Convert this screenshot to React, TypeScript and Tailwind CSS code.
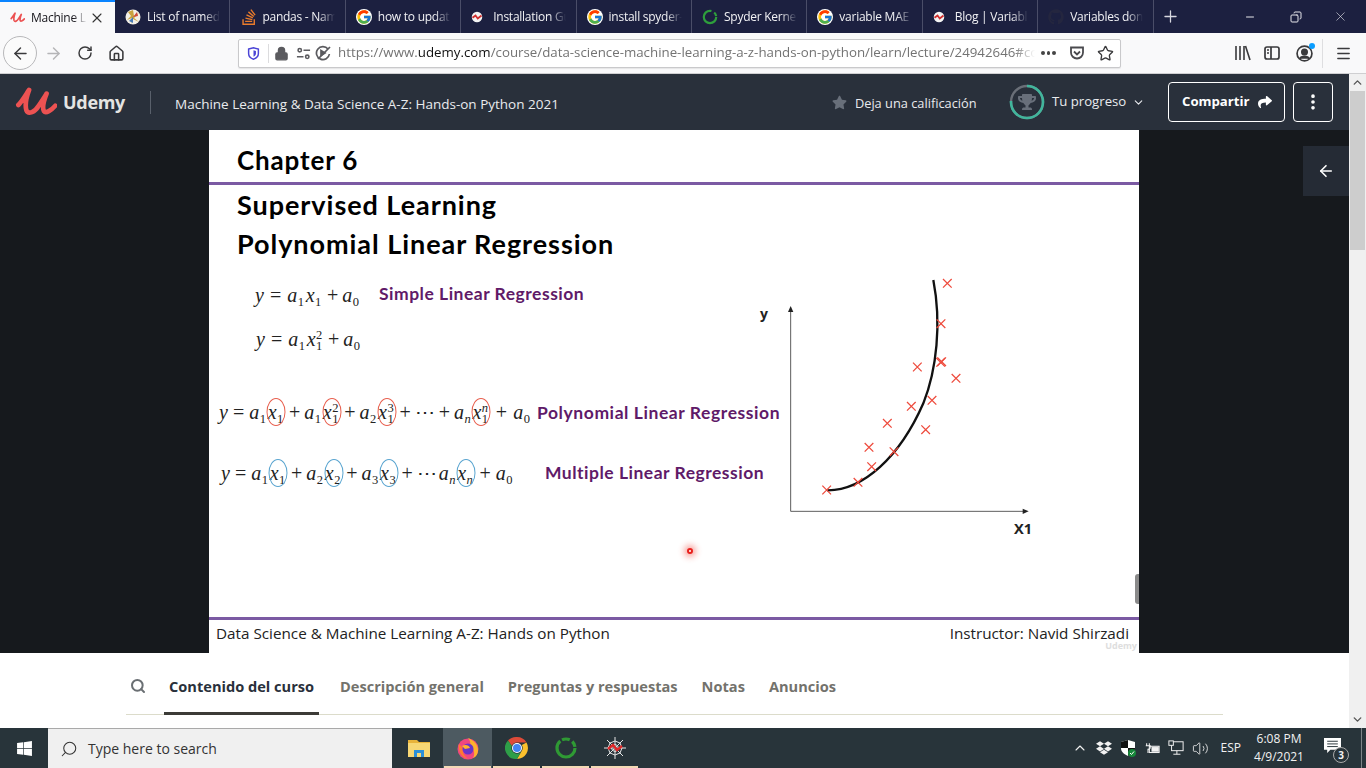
import React from 'react'
import { ArrowLeft, ArrowRight, ChevronDown, ChevronUp, Copy, EllipsisVertical, House, Lock, Menu, Minus, Plus, RotateCw, Search, Star, Volume2, X } from 'lucide-react'
import { FaDropbox, FaGithub, FaShare, FaStackOverflow, FaStar, FaTrophy, FaWindows } from 'react-icons/fa'
import { FcGoogle } from 'react-icons/fc'

const UdemyU = ({ className }: { className: string }) => (
    <svg viewBox="30 16 125 94" className={className} fill="none" stroke="#ec5252" strokeLinecap="round" strokeLinejoin="round">
        <path strokeWidth="14" d="M40 72 C52 60 62 42 72 27 C64 48 58 68 64 88 C70 102 90 92 100 75 C110 60 118 48 124 38 C116 58 110 78 116 90 C122 98 138 88 150 74" />
    </svg>
)

const GlobeIcon = () => (
    <svg viewBox="0 0 16 16" className="w-4 h-4">
        <circle cx="8" cy="8" r="7.5" fill="#f2efe6" />
        <path d="M8 1 L9 7 L14 4 L9 9 L14 13 L8 10 L6 15 L7 9 L2 11 L6 7 L3 3 Z" fill="#c9a23c" />
        <path d="M8 8 L12 3 L13 7 Z" fill="#d04a3c" />
        <path d="M8 8 L4 12 L8 14 Z" fill="#4a7bb5" />
    </svg>
)

const SpyderFav = () => (
    <svg viewBox="0 0 16 16" className="w-3 h-3">
        <circle cx="8" cy="8" r="7" fill="#f4f4f4" />
        <path d="M2 9 L6 6 L9 10 L14 6" fill="none" stroke="#cf2f2f" strokeWidth="2.4" />
    </svg>
)

const RingFav = () => (
    <svg viewBox="0 0 16 16" className="w-4 h-4">
        <circle cx="8" cy="8" r="6.2" fill="none" stroke="#2e9e3c" strokeWidth="2.2" strokeDasharray="30 3 4 2" />
    </svg>
)

const tabs = [
    { title: 'List of named', icon: <GlobeIcon /> },
    { title: 'pandas - Nam', icon: <FaStackOverflow className="w-[18px] h-[18px] text-[#e87b2c]" /> },
    { title: 'how to updat', icon: <FcGoogle className="w-4 h-4 bg-white rounded-full" /> },
    { title: 'Installation Gu', icon: <SpyderFav /> },
    { title: 'install spyder-', icon: <FcGoogle className="w-4 h-4 bg-white rounded-full" /> },
    { title: 'Spyder Kernel', icon: <RingFav /> },
    { title: 'variable MAE i', icon: <FcGoogle className="w-4 h-4 bg-white rounded-full" /> },
    { title: 'Blog | Variable', icon: <SpyderFav /> },
    { title: "Variables don'", icon: <FaGithub className="w-4 h-4 text-[#24263f]" /> },
]

const TabStrip = () => (
    <div className="h-[33px] bg-[#1c2040] flex items-stretch shrink-0 text-[12px] tracking-[-0.25px]">
        <div className="w-[115px] bg-[#f9f9fa] border-t-2 border-[#0a84ff] flex items-center pl-[10px] text-[#15141a]">
            <UdemyU className="w-[15px] h-[13px] shrink-0" />
            <span className="ml-[6px] w-[56px] overflow-hidden whitespace-nowrap [mask-image:linear-gradient(to_right,black_75%,transparent)]">Machine L</span>
            <X className="w-[16px] h-[16px] ml-[2px] text-[#333]" strokeWidth={1.6} />
        </div>
        {tabs.map((tab) => (
            <div key={tab.title} className="w-[115.4px] flex items-center border-r border-[#4a4d68] pl-[9px] text-[#f1f1f4]">
                <span className="w-[20px] shrink-0 flex items-center pl-[1px]">{tab.icon}</span>
                <span className="ml-[3px] w-[73px] overflow-hidden whitespace-nowrap [mask-image:linear-gradient(to_right,black_78%,transparent)]">{tab.title}</span>
            </div>
        ))}
        <div className="w-[34px] flex items-center justify-center text-[#d8d8e0]">
            <Plus className="w-[19px] h-[19px]" strokeWidth={1.6} />
        </div>
        <div className="ml-auto mr-[3px] flex items-center text-[#e6e6ea]">
            <span className="w-[46px] flex justify-center"><Minus className="w-3 h-3" /></span>
            <span className="w-[45px] flex justify-center"><Copy className="w-3 h-3 -scale-x-100" /></span>
            <span className="w-[45px] flex justify-center"><X className="w-[15px] h-[15px]" strokeWidth={1} /></span>
        </div>
    </div>
)

const Toolbar = () => (
    <div className="h-[41px] bg-[#f9f9fa] border-b border-[#cfcfd1] flex items-center shrink-0 text-[#3a3a3c]">
        <div className="ml-[3px] w-[34px] h-[34px] rounded-full border border-[#b8b8ba] bg-[#fbfbfb] flex items-center justify-center">
            <ArrowLeft className="w-[19px] h-[19px]" strokeWidth={1.8} />
        </div>
        <ArrowRight className="ml-[7px] w-[19px] h-[19px] text-[#b5b5b7]" strokeWidth={1.8} />
        <RotateCw className="ml-[14px] w-[16px] h-[16px]" strokeWidth={2.2} />
        <House className="ml-[15px] w-[17px] h-[17px]" strokeWidth={2.2} />
        <div className="ml-[113px] w-[883px] h-[29px] bg-white border border-[#c9c9cb] rounded-[2px] flex items-center shadow-[0_1px_1px_rgba(0,0,0,0.08)]">
            <svg viewBox="0 0 16 16" className="ml-[8px] w-[13px] h-[15px]">
                <path d="M2 2.5 L8 1 L14 2.5 V8 C14 11.5 11 14 8 15 C5 14 2 11.5 2 8 Z" fill="none" stroke="#4b44d6" strokeWidth="1.8" />
                <path d="M8 4 L11 5 V8 C11 10 9.5 11.2 8 12 Z" fill="#4b44d6" />
            </svg>
            <span className="ml-[8px] w-px h-[19px] bg-[#dcdcde]" />
            <Lock className="ml-[5px] w-[15px] h-[15px] fill-[#5b5b5f] text-[#5b5b5f]" strokeWidth={2} />
            <svg viewBox="0 0 16 16" className="ml-[7px] w-[15px] h-[15px]" fill="none" stroke="#5b5b5f" strokeWidth="1.7">
                <circle cx="4" cy="4.5" r="1.8" />
                <path d="M8 4.5 H15 M1 11.5 H8" />
                <circle cx="12" cy="11.5" r="1.8" />
            </svg>
            <svg viewBox="0 0 16 16" className="ml-[4px] w-[16px] h-[16px]" fill="none" stroke="#5b5b5f" strokeWidth="1.7">
                <path d="M13 4 A6.5 6.5 0 1 0 14.4 9" />
                <path d="M6 5.5 V10.5 L10 8 Z" fill="#5b5b5f" />
                <path d="M3 14 L15 2" />
            </svg>
            <span className="ml-[7px] w-[697px] overflow-hidden whitespace-nowrap text-[13.3px] text-[#737373] [mask-image:linear-gradient(to_right,black_97%,transparent)]">
                https://www.<span className="text-[#111]">udemy.com</span>/course/data-science-machine-learning-a-z-hands-on-python/learn/lecture/24942646#content
            </span>
            <span className="ml-[6px] flex gap-[2px]">
                <i className="w-[3.5px] h-[3.5px] rounded-full bg-[#444]" />
                <i className="w-[3.5px] h-[3.5px] rounded-full bg-[#444]" />
                <i className="w-[3.5px] h-[3.5px] rounded-full bg-[#444]" />
            </span>
            <svg viewBox="0 0 16 16" className="ml-[13px] w-[16px] h-[16px]" fill="none" stroke="#4a4a4e" strokeWidth="1.8">
                <path d="M2 2.5 H14 V7.5 A6 6 0 0 1 2 7.5 Z" />
                <path d="M5 6.5 L8 9.5 L11 6.5" />
            </svg>
            <Star className="ml-[12px] w-[17px] h-[17px]" strokeWidth={1.9} />
        </div>
        <svg viewBox="0 0 17 16" className="ml-[113px] w-[17px] h-[16px]" fill="none" stroke="#3a3a3c" strokeWidth="1.6">
            <path d="M2 1 V15 M6 1 V15 M10 1 V15 M11.5 1 L16 15" />
        </svg>
        <svg viewBox="0 0 16 16" className="ml-[13px] w-[16px] h-[16px]" fill="none" stroke="#3a3a3c" strokeWidth="1.7">
            <rect x="1" y="2" width="14" height="12" rx="2" />
            <path d="M7 2 V14 M3 5 H5 M3 8 H5" />
        </svg>
        <div className="relative ml-[16px] w-[17px] h-[17px]">
            <svg viewBox="0 0 16 16" className="w-[17px] h-[17px]" fill="none" stroke="#3a3a3c" strokeWidth="1.6">
                <circle cx="8" cy="8" r="7" />
                <circle cx="8" cy="6.5" r="2.5" fill="#3a3a3c" />
                <path d="M3.5 13 C5 10 11 10 12.5 13" fill="#3a3a3c" />
            </svg>
            <span className="absolute -top-[2px] -right-[2px] w-[6px] h-[6px] rounded-full bg-[#0a9dff]" />
        </div>
        <span className="ml-[9px] w-px h-[29px] bg-[#dedee0]" />
        <Menu className="ml-[12px] w-[17px] h-[17px]" strokeWidth={2} />
    </div>
)

const CourseHeader = () => (
    <div className="h-[56px] bg-[#29303b] flex items-center text-[#e9ebee] text-[13.5px]">
        <UdemyU className="ml-[15px] w-[42px] h-[32px]" />
        <span className="ml-[6px] text-[18px] font-bold text-[#e4e4e2] tracking-[-0.3px]">Udemy</span>
        <span className="ml-[25px] w-px h-[23px] bg-[#59606b]" />
        <span className="ml-[24px] mt-[5px] whitespace-nowrap">Machine Learning &amp; Data Science A-Z: Hands-on Python 2021</span>
        <FaStar className="ml-[273px] w-[15px] h-[15px] text-[#686f7a]" />
        <span className="ml-[8px] mt-[3px] w-[122px] text-[12.8px] whitespace-nowrap">Deja una calificación</span>
        <div className="relative ml-[32px] w-[36px] h-[36px] flex items-center justify-center">
            <svg viewBox="0 0 36 36" className="absolute inset-0 -rotate-90">
                <circle cx="18" cy="18" r="16" fill="none" stroke="#6a6f78" strokeWidth="2.4" />
                <circle cx="18" cy="18" r="16" fill="none" stroke="#41b59c" strokeWidth="2.6" strokeDasharray="76 100" />
            </svg>
            <FaTrophy className="w-[18px] h-[18px] text-[#686f7a]" />
        </div>
        <span className="ml-[7px] text-[13.2px] whitespace-nowrap">Tu progreso</span>
        <ChevronDown className="ml-[6px] w-[13px] h-[13px]" strokeWidth={2} />
        <button className="ml-[23px] w-[117px] h-[40px] border border-white rounded-[4px] flex items-center justify-center gap-[8px] font-bold text-[13.2px] text-white">
            Compartir
            <FaShare className="w-[14px] h-[14px]" />
        </button>
        <button className="ml-[8px] w-[40px] h-[40px] border border-white rounded-[4px] flex items-center justify-center text-white">
            <EllipsisVertical className="w-[20px] h-[20px]" strokeWidth={2.4} />
        </button>
    </div>
)

type TermProps = { b: string; sub?: string; sup?: string; ring?: string }

const Term = ({ b, sub, sup, ring }: TermProps) => (
    <span className="relative inline-flex items-center">
        <i>{b}</i>
        {(sub || sup) && (
            <span className="inline-flex flex-col justify-end h-[26px] w-[8px] ml-[0.5px] text-[12.5px] leading-[11px]">
                {sup && <span className={sup === 'n' ? 'italic' : ''}>{sup}</span>}
                {sub && <span className={sub === 'n' ? 'italic' : ''}>{sub}</span>}
            </span>
        )}
        {ring && <span className={`absolute left-1/2 top-1/2 -translate-x-1/2 -translate-y-1/2 w-[19px] h-[28px] rounded-[50%] border ${ring}`} />}
    </span>
)

const Equation = ({ children, className }: { children: React.ReactNode; className: string }) => (
    <div className={`flex items-center text-[20px] text-[#222] whitespace-nowrap font-['Liberation_Serif',serif] ${className}`}>{children}</div>
)

const Label = ({ children, className = '' }: { children: React.ReactNode; className?: string }) => (
    <span className={`text-[#5f1a68] font-bold text-[17.5px] tracking-[0.5px] whitespace-nowrap font-['Lato',sans-serif] ${className}`}>{children}</span>
)

const Op = ({ children, className = 'mx-[4px]' }: { children: React.ReactNode; className?: string }) => (
    <span className={className}>{children}</span>
)

const RED = 'border-[#e8604f]'
const BLUE = 'border-[#5aa5d0]'

const crosses = [
    [592, 40], [573, 161], [572, 277], [575, 275], [502, 291], [618, 325], [546, 391], [484, 409], [412, 460],
    [527, 479], [357, 532], [432, 545], [365, 590], [324, 637], [230, 660],
]

const Graph = () => (
    <svg viewBox="0 0 900 870" className="absolute left-[541px] top-[140px] w-[300px] h-[290px]">
        <path d="M122 724 V118" stroke="#333" strokeWidth="2.4" />
        <path d="M114 126 L122 108 L130 126 Z" fill="#222" />
        <path d="M122 724 H825" stroke="#333" strokeWidth="2.4" />
        <path d="M818 716 L836 724 L818 732 Z" fill="#222" />
        <path d="M232 661 C340 662 450 560 520 400 C560 300 575 160 550 30" fill="none" stroke="#111" strokeWidth="7" />
        {crosses.map(([x, y]) => (
            <path key={`${x}-${y}`} d={`M${x - 13} ${y - 13} L${x + 13} ${y + 13} M${x + 13} ${y - 13} L${x - 13} ${y + 13}`} stroke="#ee4a3c" strokeWidth="3.8" />
        ))}
        <text x="30" y="147" fontFamily="Open Sans, sans-serif" fontWeight="700" fontSize="42" fill="#222">y</text>
        <text x="792" y="793" fontFamily="Open Sans, sans-serif" fontWeight="700" fontSize="44" fill="#222">X1</text>
    </svg>
)

const Slide = () => (
    <div className="relative w-[930px] h-[523px] bg-white flex flex-col shrink-0 text-black font-['Lato',sans-serif]">
        <div className="h-[52px] flex items-center pl-[28px] pt-[8px] text-[26px] font-bold tracking-[0.85px]">Chapter 6</div>
        <div className="h-[3px] bg-[#7b5aa3]" />
        <div className="pl-[28px] text-[27px] font-bold tracking-[0.95px] leading-[39px]">
            <div>Supervised Learning</div>
            <div>Polynomial Linear Regression</div>
        </div>
        <div className="flex items-center mt-[18px] h-[28px]">
            <Equation className="ml-[46px] w-[124px]">
                <Term b="y" /><Op className="mx-[6px]">=</Op><Term b="a" sub="1" /><Term b="x" sub="1" /><Op>+</Op><Term b="a" sub="0" />
            </Equation>
            <Label className="mb-[2px]">Simple Linear Regression</Label>
        </div>
        <div className="mt-[16px] h-[28px] flex items-center">
            <Equation className="ml-[47px]">
                <Term b="y" /><Op className="mx-[6px]">=</Op><Term b="a" sub="1" /><Term b="x" sub="1" sup="2" /><Op>+</Op><Term b="a" sub="0" />
            </Equation>
        </div>
        <div className="mt-[44px] h-[30px] flex items-center">
            <Equation className="ml-[10px] w-[318px]">
                <Term b="y" /><Op className="mx-[5px]">=</Op><Term b="a" sub="1" /><Term b="x" sub="1" ring={RED} /><Op>+</Op>
                <Term b="a" sub="1" /><Term b="x" sub="1" sup="2" ring={RED} /><Op>+</Op>
                <Term b="a" sub="2" /><Term b="x" sub="1" sup="3" ring={RED} /><Op>+</Op><span>⋯</span><Op>+</Op>
                <Term b="a" sub="n" /><Term b="x" sub="1" sup="n" ring={RED} /><Op className="mx-[6px]">+</Op><Term b="a" sub="0" />
            </Equation>
            <Label className="mt-[2px] tracking-[0.57px]">Polynomial Linear Regression</Label>
        </div>
        <div className="mt-[31px] h-[30px] flex items-center">
            <Equation className="ml-[12px] w-[324px]">
                <Term b="y" /><Op className="mx-[5px]">=</Op><Term b="a" sub="1" /><Term b="x" sub="1" ring={BLUE} /><Op>+</Op>
                <Term b="a" sub="2" /><Term b="x" sub="2" ring={BLUE} /><Op>+</Op>
                <Term b="a" sub="3" /><Term b="x" sub="3" ring={BLUE} /><Op>+</Op><span className="mr-[2px]">⋯</span>
                <Term b="a" sub="n" /><Term b="x" sub="n" ring={BLUE} /><Op className="mx-[5px]">+</Op><Term b="a" sub="0" />
            </Equation>
            <Label>Multiple Linear Regression</Label>
        </div>
        <Graph />
        <span className="absolute left-[478px] top-[418px] w-[6px] h-[6px] rounded-full bg-white border-2 border-[#e8201c] shadow-[0_0_6px_3px_rgba(240,50,40,0.45)]" />
        <span className="absolute right-0 top-[444px] w-[4px] h-[30px] rounded-l-[3px] bg-[#8a8a8a]" />
        <div className="mt-auto h-[3px] bg-[#7b5aa3]" />
        <div className="h-[33px] pl-[7px] pr-[10px] flex justify-between text-[15.25px] text-[#222] font-['Open_Sans',sans-serif] leading-[26px]">
            <span>Data Science &amp; Machine Learning A-Z: Hands on Python</span>
            <span className="relative">
                Instructor: Navid Shirzadi
                <span className="absolute right-[-8px] top-[20px] text-[9px] leading-[12px] font-bold text-[#dedede]">Udemy</span>
            </span>
        </div>
    </div>
)

const VideoArea = () => (
    <div className="relative h-[523px] bg-[#16191d] flex pl-[209px]">
        <Slide />
        <div className="absolute right-0 top-[16px] w-[46px] h-[50px] bg-[#252b35] flex items-center justify-center text-white">
            <ArrowLeft className="w-[18px] h-[18px]" strokeWidth={2.2} />
        </div>
    </div>
)

const courseTabs = ['Descripción general', 'Preguntas y respuestas', 'Notas', 'Anuncios']

const CourseTabs = () => (
    <div className="h-[75px] bg-white font-bold text-[14.6px] leading-[20px]">
        <div className="mx-[126px] h-[62px] border-b border-[#dcdccb] flex items-stretch pt-[23px]">
            <Search className="ml-[4px] mt-[2px] w-[16px] h-[16px] text-[#6a6f73]" strokeWidth={3} />
            <div className="ml-[18px] pl-[5px] -mb-px border-b-[3px] border-[#3c3b37] text-[#29303b] w-[155px] whitespace-nowrap">Contenido del curso</div>
            <div className="flex gap-[24px] ml-[21px] text-[#73726c] whitespace-nowrap">
                {courseTabs.map((t) => <span key={t}>{t}</span>)}
            </div>
        </div>
    </div>
)

const Scrollbar = () => (
    <div className="w-[17px] bg-[#f0f0f0] flex flex-col items-center">
        <ChevronUp className="w-[13px] h-[17px] text-[#555]" strokeWidth={2.6} />
        <div className="w-[15px] h-[159px] bg-[#cdcdcd]" />
        <ChevronDown className="mt-auto w-[13px] h-[17px] text-[#555]" strokeWidth={2.6} />
    </div>
)

const TaskIcon = ({ children, active }: { children: React.ReactNode; active?: boolean }) => (
    <div className={`relative w-[49px] h-full flex items-center justify-center ${active ? 'bg-[#4d5a61]' : ''}`}>
        {children}
        <span className="absolute bottom-0 left-[1px] right-[1px] h-[2px] bg-[#f3d9b5]" />
    </div>
)

const Taskbar = () => (
    <div className="h-[40px] bg-[#28343a] flex items-stretch text-white shrink-0">
        <div className="w-[48px] flex items-center justify-center">
            <FaWindows className="w-[17px] h-[17px]" />
        </div>
        <div className="w-[344px] bg-[#f0f0f0] border-t border-[#a9a9a9] flex items-center pl-[12px] text-[#333] text-[14px]">
            <Search className="w-[18px] h-[18px] -scale-x-100" strokeWidth={1.4} />
            <span className="ml-[10px]">Type here to search</span>
        </div>
        <div className="ml-[2px] w-[49px] flex items-center justify-center">
            <svg viewBox="0 0 24 24" className="w-[24px] h-[24px]">
                <path d="M1 4 H10 L12 6 H23 V8 H1 Z" fill="#e8b33a" />
                <rect x="1" y="7" width="22" height="14" fill="#f7d774" />
                <rect x="7" y="14" width="10" height="7" fill="#2b8fd8" />
                <rect x="10" y="17" width="4" height="4" fill="#f7d774" />
            </svg>
        </div>
        <TaskIcon active>
            <svg viewBox="0 0 24 24" className="w-[24px] h-[24px]">
                <circle cx="12" cy="13" r="10.5" fill="#f0477f" />
                <path d="M12 2 C17 4 22 8 22 14 C22 18 20 21 17 22 C20 17 17 12 14 10 C15 7 14 4 12 2 Z" fill="#ffb22c" />
                <path d="M3 8 C2 13 4 21 12 23 C8 20 6 16 7 12 Z" fill="#ff7a2f" />
                <circle cx="12" cy="13" r="5.5" fill="#6a35c9" />
                <path d="M6 10 C9 8 13 9 14 12 L9 13 Z" fill="#ffb22c" />
            </svg>
        </TaskIcon>
        <TaskIcon>
            <svg viewBox="0 0 24 24" className="w-[24px] h-[24px]">
                <path d="M12 1 A11 11 0 0 1 21.5 6.5 H12 A5.5 5.5 0 0 0 6.8 10 L3 4.5 A11 11 0 0 1 12 1 Z" fill="#dd4b39" />
                <path d="M21.5 6.5 A11 11 0 0 1 12 23 L16.7 15 A5.5 5.5 0 0 0 16.8 9 Z" fill="#fbc02d" />
                <path d="M3 4.5 A11 11 0 0 0 12 23 L16 15.7 A5.5 5.5 0 0 1 6.8 10 Z" fill="#2e9e48" />
                <circle cx="12" cy="12" r="5" fill="#fff" />
                <circle cx="12" cy="12" r="4" fill="#4285f4" />
            </svg>
        </TaskIcon>
        <TaskIcon>
            <svg viewBox="0 0 24 24" className="w-[24px] h-[24px]">
                <circle cx="12" cy="12" r="9" fill="none" stroke="#2f9a34" strokeWidth="3.2" strokeDasharray="36 2 8 3 6 2" />
            </svg>
        </TaskIcon>
        <TaskIcon>
            <svg viewBox="0 0 24 24" className="w-[24px] h-[24px]" fill="none" stroke="#e5e5e5" strokeWidth="1">
                <path d="M12 1 V23 M1 12 H23 M4 4 L20 20 M20 4 L4 20" />
                <path d="M12 5 L17 7 L19 12 L17 17 L12 19 L7 17 L5 12 L7 7 Z" />
                <path d="M12 8.5 L14.5 9.5 L15.5 12 L14.5 14.5 L12 15.5 L9.5 14.5 L8.5 12 L9.5 9.5 Z" />
                <path d="M5 13 L10 9 L14 14 L19 10" stroke="#e02828" strokeWidth="2.4" />
            </svg>
        </TaskIcon>
        <div className="ml-auto flex items-center text-[#f2f2f2]">
            <ChevronUp className="w-[16px] h-[16px]" strokeWidth={1.6} />
            <FaDropbox className="ml-[8px] w-[16px] h-[16px]" />
            <svg viewBox="0 0 16 18" className="ml-[8px] w-[16px] h-[18px]">
                <path d="M8 1 L15 3 V9 C15 13 12 15 8 17 C4 15 1 13 1 9 V3 Z" fill="#fff" />
                <path d="M8 1 V9 H1 V3 Z M8 9 H15 C15 13 12 15 8 17 Z" fill="#111" />
                <circle cx="12" cy="14" r="4" fill="#16873a" />
                <path d="M10 14 L11.5 15.5 L14 12.5" fill="none" stroke="#fff" strokeWidth="1" />
            </svg>
            <svg viewBox="0 0 18 14" className="ml-[8px] w-[16px] h-[13px]" fill="none" stroke="#f2f2f2" strokeWidth="1.2">
                <path d="M3 1 V4 M6 1 V4 M2 4 H7 V6 C7 8 5 8 4.500 8 V12" />
                <rect x="6" y="4.500" width="11" height="7" />
                <rect x="9" y="6" width="7" height="4" fill="#f2f2f2" />
            </svg>
            <svg viewBox="0 0 18 18" className="ml-[8px] w-[16px] h-[16px]" fill="none" stroke="#f2f2f2" strokeWidth="1.1">
                <rect x="4" y="2" width="13" height="10" />
                <rect x="1" y="1" width="5" height="5" fill="#28343a" />
                <path d="M10 12 V16 M6 16 H14" />
            </svg>
            <Volume2 className="ml-[8px] w-[17px] h-[17px]" strokeWidth={1.2} />
            <span className="ml-[12px] text-[12px]">ESP</span>
            <div className="ml-[8px] w-[60px] flex flex-col items-center text-[12px] leading-[18px]">
                <span>6:08 PM</span>
                <span>4/9/2021</span>
            </div>
            <div className="relative ml-[12px] w-[24px] h-[24px]">
                <svg viewBox="0 0 16 16" className="w-[17px] h-[17px] ml-[3px] mt-[1px]">
                    <path d="M0 1 H16 V12 H6 L3 15 V12 H0 Z" fill="#fff" />
                    <path d="M3 4 H13 M3 6.500 H13 M3 9 H13" stroke="#28343a" strokeWidth="0.9" />
                </svg>
                <span className="absolute -right-[4px] -bottom-[3px] w-[16px] h-[16px] rounded-full bg-[#28343a] border border-[#aaa] flex items-center justify-center text-[10px] font-bold">3</span>
            </div>
            <span className="ml-[16px] mr-[4px] w-px h-full bg-[#7d8487]" />
        </div>
    </div>
)

const App = () => {
    return (
        <div className="w-[1366px] h-[768px] overflow-hidden flex flex-col bg-white font-['Open_Sans',sans-serif]">
            <TabStrip />
            <Toolbar />
            <div className="flex h-[654px] shrink-0">
                <div className="w-[1349px] flex flex-col">
                    <CourseHeader />
                    <VideoArea />
                    <CourseTabs />
                </div>
                <Scrollbar />
            </div>
            <Taskbar />
        </div>
    )
}

export default App
